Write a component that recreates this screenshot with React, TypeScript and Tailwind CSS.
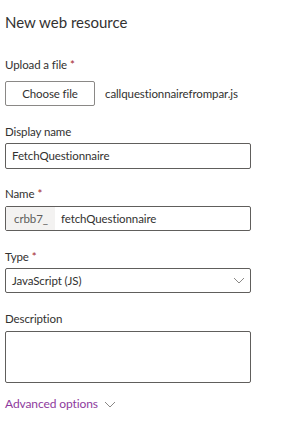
import React from "react";

const font = { fontFamily: 'Lato, "Open Sans", sans-serif' };

function Label({ text, req }: { text: string; req?: boolean }) {
  return (
    <div className="text-[11.5px] leading-[16px] tracking-[-0.1px] text-[#323130]">
      {text}
      {req && <span className="text-[#a4262c] ml-[3px]">*</span>}
    </div>
  );
}

function Chevron() {
  return (
    <svg width="12" height="7" viewBox="0 0 12 7" fill="none">
      <path d="M1 1L6 6L11 1" stroke="#8a8886" strokeWidth="1" />
    </svg>
  );
}

export default function App() {
  return (
    <div className="w-[293px] h-[423px] bg-white pl-[5px] pt-[12px] text-[#323130]" style={font}>
      <div className="text-[15px] leading-[20px]">New web resource</div>

      <div className="mt-[25px]">
        <Label text="Upload a file" req />
        <div className="mt-[8px] flex items-center text-[11.5px] tracking-[-0.1px]">
          <div className="w-[90px] h-[25px] border border-[#8a8886] rounded-[2px] flex items-center justify-center">
            Choose file
          </div>
          <div className="ml-[10px]">callquestionnairefrompar.js</div>
        </div>
      </div>

      <div className="mt-[18px]">
        <Label text="Display name" />
        <div className="mt-[3px] w-[246px] h-[26px] border border-[#605e5c] rounded-[2px] flex items-center pl-[6px] text-[11.5px] tracking-[-0.1px]">
          FetchQuestionnaire
        </div>
      </div>

      <div className="mt-[17px]">
        <Label text="Name" req />
        <div className="mt-[4px] w-[246px] h-[25px] border border-[#605e5c] rounded-[2px] flex items-stretch text-[11.5px] tracking-[-0.1px]">
          <div className="w-[49px] bg-[#f3f2f1] flex items-center pl-[8px] text-[#605e5c]">crbb7_</div>
          <div className="flex items-center pl-[6px]">fetchQuestionnaire</div>
        </div>
      </div>

      <div className="mt-[18px]">
        <Label text="Type" req />
        <div className="mt-[3px] w-[246px] h-[25px] border border-[#605e5c] rounded-[2px] flex items-center justify-between pl-[6px] pr-[5px] text-[11.5px] tracking-[-0.1px]">
          <span>JavaScript (JS)</span>
          <Chevron />
        </div>
      </div>

      <div className="mt-[18px]">
        <Label text="Description" />
        <div className="mt-[4px] w-[246px] h-[52px] border border-[#605e5c] rounded-[2px]"></div>
      </div>

      <div className="mt-[13px] flex items-center gap-[6px]">
        <span className="text-[12px] leading-[16px] tracking-[-0.1px] text-[#8e3a9d]">Advanced options</span>
        <Chevron />
      </div>
    </div>
  );
}
